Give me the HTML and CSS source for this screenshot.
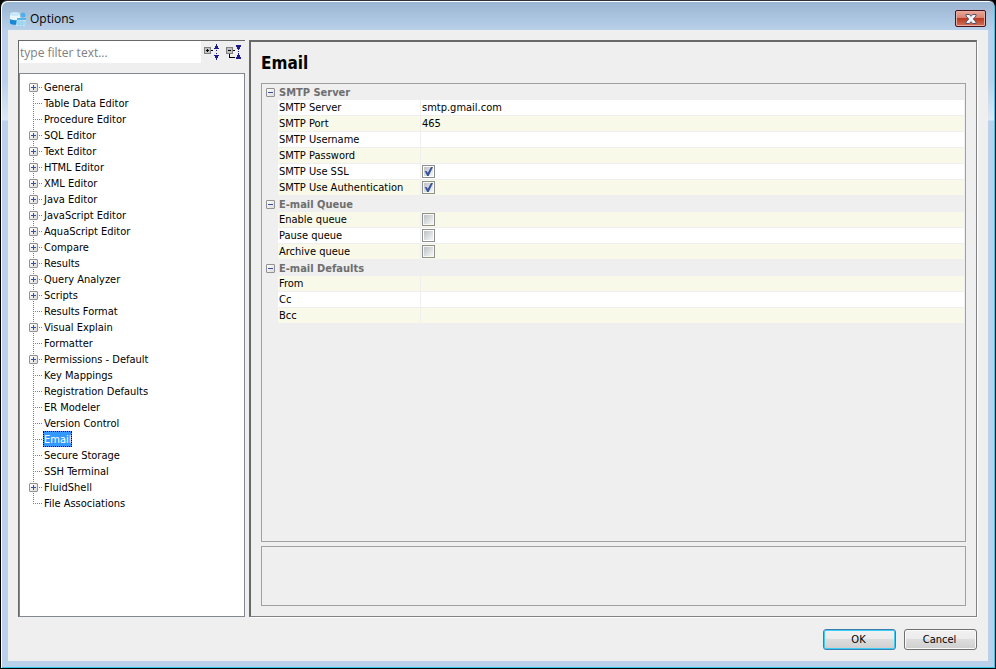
FILE: index.html
```html
<!DOCTYPE html>
<html lang="en">
<head>
<meta charset="utf-8">
<title>Options</title>
<link rel="stylesheet" href="styles.css">
</head>
<body>
<div class="window">
  <header class="titlebar">
    <svg class="app-icon" viewBox="0 0 16 16" aria-hidden="true">
      <path d="M0 3v9c1 2 8 2 10 0V3z" fill="#2f9be0"/>
      <path d="M0 4v4c2 1.500 8 1.500 10 0V4z" fill="#e8f6fd"/>
      <ellipse cx="5" cy="3" rx="5" ry="2" fill="#c9e9f8"/>
      <path d="M0 8.500c2 1.500 8 1.500 10 0V12c-1 2-9 2-10 0z" fill="#1787d6"/>
      <circle cx="13" cy="4" r="2.500" fill="#4fb0ea"/>
      <path d="M7 7h9l-1 8H6z" fill="#c4e8f8"/>
      <path d="M7 7h9v2H7z" fill="#5bb6e8"/>
      <path d="M7 11h8M7 13h8M9 9v6M12 9v6" stroke="#8ccbee" stroke-width="1"/>
    </svg>
    <h1 class="title">Options</h1>
    <button class="close" type="button" aria-label="Close">
      <svg viewBox="0 0 12 10" aria-hidden="true"><path d="M1 .5h3.500L6 2.300 7.500.500H11v1.500L8.300 5 11 8v1.500H7.500L6 7.700 4.500 9.500H1V8l2.700-3L1 2z" fill="#f4f4f6" stroke="#53566b" stroke-width="1"/></svg>
    </button>
  </header>
  <main class="client">
    <div class="panes">
      <nav class="sidebar">
        <div class="filter">
          <input class="filter-box" type="text" placeholder="type filter text..." aria-label="Filter">
          <button class="tool" type="button" aria-label="Expand all">
            <svg viewBox="0 0 16 16" shape-rendering="crispEdges" aria-hidden="true">
              <path d="M.5 3.500h6v6h-6z" fill="#c0c0c0" stroke="#808080"/>
              <path d="M2 6h3v1H2zM3 5h1v3H3zM7 6h2v1H7z" fill="#000"/>
              <path d="M12 0h1v2h1v2h1v1h-5V4h1V2h1zM10 11h5v1h-1v2h-1v2h-1v-2h-1v-2h-1zM12 6h1v1h-1zM12 9h1v1h-1z" fill="#1b1b8f"/>
            </svg>
          </button>
          <button class="tool" type="button" aria-label="Collapse all">
            <svg viewBox="0 0 16 16" shape-rendering="crispEdges" aria-hidden="true">
              <path d="M.5 3.500h6v6h-6z" fill="#c0c0c0" stroke="#808080"/>
              <path d="M2 6h3v1H2zM7 6h2v1H7zM3 10h1v3h5v1H3z" fill="#000"/>
              <path d="M10 1h5v2h-1v2h-1v1h-1V5h-1V3h-1zM12 9h1v2h1v2h1v2h-5v-2h1v-2h1zM12 7h1v1h-1z" fill="#1b1b8f"/>
            </svg>
          </button>
        </div>
        <ul class="tree">
          <li><button class="toggle plus" type="button" aria-label="Expand General"></button><a href="#general">General</a></li>
          <li><a href="#table-data">Table Data Editor</a></li>
          <li><a href="#procedure">Procedure Editor</a></li>
          <li><button class="toggle plus" type="button" aria-label="Expand SQL Editor"></button><a href="#sql">SQL Editor</a></li>
          <li><button class="toggle plus" type="button" aria-label="Expand Text Editor"></button><a href="#text">Text Editor</a></li>
          <li><button class="toggle plus" type="button" aria-label="Expand HTML Editor"></button><a href="#html">HTML Editor</a></li>
          <li><button class="toggle plus" type="button" aria-label="Expand XML Editor"></button><a href="#xml">XML Editor</a></li>
          <li><button class="toggle plus" type="button" aria-label="Expand Java Editor"></button><a href="#java">Java Editor</a></li>
          <li><button class="toggle plus" type="button" aria-label="Expand JavaScript Editor"></button><a href="#javascript">JavaScript Editor</a></li>
          <li><button class="toggle plus" type="button" aria-label="Expand AquaScript Editor"></button><a href="#aquascript">AquaScript Editor</a></li>
          <li><button class="toggle plus" type="button" aria-label="Expand Compare"></button><a href="#compare">Compare</a></li>
          <li><button class="toggle plus" type="button" aria-label="Expand Results"></button><a href="#results">Results</a></li>
          <li><button class="toggle plus" type="button" aria-label="Expand Query Analyzer"></button><a href="#analyzer">Query Analyzer</a></li>
          <li><button class="toggle plus" type="button" aria-label="Expand Scripts"></button><a href="#scripts">Scripts</a></li>
          <li><a href="#results-format">Results Format</a></li>
          <li><button class="toggle plus" type="button" aria-label="Expand Visual Explain"></button><a href="#explain">Visual Explain</a></li>
          <li><a href="#formatter">Formatter</a></li>
          <li><button class="toggle plus" type="button" aria-label="Expand Permissions - Default"></button><a href="#permissions">Permissions - Default</a></li>
          <li><a href="#keys">Key Mappings</a></li>
          <li><a href="#registration">Registration Defaults</a></li>
          <li><a href="#er">ER Modeler</a></li>
          <li><a href="#version">Version Control</a></li>
          <li><a class="selected" href="#email" aria-current="page">Email</a></li>
          <li><a href="#storage">Secure Storage</a></li>
          <li><a href="#ssh">SSH Terminal</a></li>
          <li><button class="toggle plus" type="button" aria-label="Expand FluidShell"></button><a href="#fluidshell">FluidShell</a></li>
          <li><a href="#files">File Associations</a></li>
        </ul>
      </nav>
      <section class="page" id="email">
        <h2 class="page-title">Email</h2>
        <div class="properties">
          <table class="grid">
            <colgroup><col class="col-gutter"><col class="col-name"><col></colgroup>
            <tbody>
              <tr class="group"><td><button class="toggle" type="button" aria-label="Collapse SMTP Server"></button></td><th colspan="2">SMTP Server</th></tr>
              <tr class="plain"><td></td><td><label for="server">SMTP Server</label></td><td><input class="value" id="server" type="text" value="smtp.gmail.com"></td></tr>
              <tr class="tint"><td></td><td><label for="port">SMTP Port</label></td><td><input class="value" id="port" type="text" value="465"></td></tr>
              <tr class="plain"><td></td><td><label for="user">SMTP Username</label></td><td><input class="value" id="user" type="text"></td></tr>
              <tr class="tint"><td></td><td><label for="pass">SMTP Password</label></td><td><input class="value" id="pass" type="password"></td></tr>
              <tr class="plain"><td></td><td><label for="ssl">SMTP Use SSL</label></td><td><input class="check" id="ssl" type="checkbox" checked></td></tr>
              <tr class="tint"><td></td><td><label for="auth">SMTP Use Authentication</label></td><td><input class="check" id="auth" type="checkbox" checked></td></tr>
            </tbody>
            <tbody>
              <tr class="group"><td><button class="toggle" type="button" aria-label="Collapse E-mail Queue"></button></td><th colspan="2">E-mail Queue</th></tr>
              <tr class="tint"><td></td><td><label for="enable">Enable queue</label></td><td><input class="check" id="enable" type="checkbox"></td></tr>
              <tr class="plain"><td></td><td><label for="pause">Pause queue</label></td><td><input class="check" id="pause" type="checkbox"></td></tr>
              <tr class="tint"><td></td><td><label for="archive">Archive queue</label></td><td><input class="check" id="archive" type="checkbox"></td></tr>
            </tbody>
            <tbody>
              <tr class="group"><td><button class="toggle" type="button" aria-label="Collapse E-mail Defaults"></button></td><th colspan="2">E-mail Defaults</th></tr>
              <tr class="tint"><td></td><td><label for="from">From</label></td><td><input class="value" id="from" type="text"></td></tr>
              <tr class="plain"><td></td><td><label for="cc">Cc</label></td><td><input class="value" id="cc" type="text"></td></tr>
              <tr class="tint"><td></td><td><label for="bcc">Bcc</label></td><td><input class="value" id="bcc" type="text"></td></tr>
            </tbody>
          </table>
        </div>
        <div class="description"></div>
      </section>
    </div>
    <footer class="actions">
      <button class="button primary" type="button">OK</button>
      <button class="button" type="button">Cancel</button>
    </footer>
  </main>
</div>
</body>
</html>
```
FILE: styles.css
```css
* {
  box-sizing: border-box;
}

body {
  margin: 0;
  background: #000;
  color: #000;
  font: 11px/16px "DejaVu Sans Condensed", "DejaVu Sans", sans-serif;
}

button,
input {
  margin: 0;
  padding: 0;
  font: inherit;
  color: inherit;
}

.window {
  display: flex;
  flex-direction: column;
  height: 100vh;
  padding: 0 7px 7px 6px;
  border: 1px solid #000;
  border-top-color: #2e2e38;
  border-radius: 7px 7px 0 0;
  background: linear-gradient(#99b4d1 0, #b9d1ea 30px, #b9d1ea 80px, #dbe8f6 119px, #b9d1ea 120px);
  box-shadow: inset 1px 1px #fff, inset -1px -1px #35c8e8;
}

.titlebar {
  display: flex;
  align-items: center;
  gap: 4px;
  height: 29px;
  padding: 6px 2px 0 3px;
}

.app-icon {
  width: 16px;
  height: 16px;
}

.title {
  flex: 1;
  margin: 0;
  font: 12px/16px "Open Sans", sans-serif;
}

.close {
  display: flex;
  align-items: center;
  justify-content: center;
  width: 31px;
  height: 17px;
  border: 1px solid #48131f;
  border-radius: 2px;
  background: linear-gradient(#e9a99b 0, #d98272 45%, #b93a20 50%, #d0725b 100%);
  box-shadow: inset 0 0 0 1px #e6aca0;
}

.close svg {
  width: 12px;
  height: 10px;
}

.client {
  flex: 1;
  display: flex;
  flex-direction: column;
  min-height: 0;
  margin-left: 1px;
  padding: 10px 11px 11px 10px;
  background: #efefef;
}

.panes {
  flex: 1;
  display: flex;
  gap: 4px;
  min-height: 0;
}

.sidebar {
  display: flex;
  flex-direction: column;
  width: 227px;
  border-top: 1px solid #696969;
  border-left: 1px solid #696969;
}

.filter {
  display: flex;
  align-items: flex-start;
  height: 32px;
}

.filter-box {
  flex: 1;
  min-width: 0;
  height: 22px;
  padding: 0 1px;
  border: 0;
  background: #fff;
  font: 12px/16px "Open Sans", sans-serif;
}

.filter-box::placeholder {
  color: #808080;
  opacity: 1;
}

.tool {
  width: 22px;
  height: 22px;
  padding: 3px;
  border: 0;
  background: none;
}

.tool svg {
  display: block;
  width: 16px;
  height: 16px;
}

.tree {
  flex: 1;
  margin: 0;
  padding: 5px 9px;
  border: 1px solid #828790;
  background: #fff;
  list-style: none;
}

.tree li {
  display: flex;
  align-items: center;
  position: relative;
  height: 16px;
  padding-left: 14px;
  background:
    repeating-linear-gradient(90deg, #808080 0 1px, transparent 1px 2px) 4px 8px / 10px 1px no-repeat,
    repeating-linear-gradient(#808080 0 1px, transparent 1px 2px) 4px 0 / 1px 16px no-repeat;
}

.tree li:first-child {
  background-position: 4px 8px, 4px 8px;
}

.tree li:last-child {
  background-size: 10px 1px, 1px 9px;
}

.tree a {
  padding: 2px 1px 0;
  line-height: 14px;
  color: #000;
  text-decoration: none;
}

.tree .selected {
  outline: 1px dotted #000;
  outline-offset: -1px;
  background: #3399ff;
  color: #fff;
}

.toggle {
  display: block;
  width: 9px;
  height: 9px;
  border: 1px solid #919191;
  border-radius: 1px;
  background:
    linear-gradient(#39539b, #39539b) center / 5px 1px no-repeat,
    linear-gradient(135deg, #fff, #dcdcdc);
}

.toggle.plus {
  position: absolute;
  left: 0;
  top: 4px;
  background:
    linear-gradient(#39539b, #39539b) center / 5px 1px no-repeat,
    linear-gradient(#39539b, #39539b) center / 1px 5px no-repeat,
    linear-gradient(135deg, #fff, #dcdcdc);
}

.page {
  flex: 1;
  display: flex;
  flex-direction: column;
  min-width: 0;
  padding: 11px 10px 10px;
  border: 2px solid #696969;
  border-right: 1px solid #828282;
  border-bottom: 1px solid #828282;
  box-shadow: 1px 1px #fff;
}

.page-title {
  margin: 0 0 10px;
  font-size: 17px;
  line-height: 20px;
}

.properties {
  flex: 1;
  padding-right: 1px;
  border: 1px solid #a0a0a0;
}

.grid {
  width: 100%;
  border-spacing: 0;
  table-layout: fixed;
}

.col-gutter {
  width: 16px;
}

.col-name {
  width: 142px;
}

.grid td,
.grid th {
  height: 16px;
  padding: 0 1px;
  line-height: 15px;
  text-align: left;
  white-space: nowrap;
}

.grid .group td {
  padding-left: 4px;
}

.grid th {
  color: #6e6e6e;
}

.plain td,
.tint td {
  border-bottom: 1px solid #efefef;
}

.plain td + td {
  background: #fff;
}

.tint td + td {
  background: #f9f9e9;
}

.grid td + td + td {
  border-left: 1px solid #efefef;
  padding: 0;
}

.value {
  display: block;
  width: 100%;
  height: 15px;
  padding: 0 1px;
  border: 0;
  background: transparent;
}

.check {
  appearance: none;
  display: grid;
  place-items: center;
  width: 13px;
  height: 13px;
  margin-left: 1px;
  padding: 1px;
  border: 1px solid #8e8f8f;
  background: linear-gradient(135deg, #bcc1c7, #f6f6f6) content-box #f4f4f4;
}

.check:checked::before {
  content: "";
  width: 9px;
  height: 9px;
  background: #39539b;
  clip-path: polygon(8% 45%, 28% 45%, 42% 65%, 78% 0, 100% 0, 52% 100%, 35% 100%);
}

.description {
  height: 60px;
  margin-top: 4px;
  border: 1px solid #a0a0a0;
}

.actions {
  display: flex;
  justify-content: flex-end;
  gap: 8px;
  padding-top: 12px;
}

.button {
  width: 73px;
  height: 21px;
  padding: 0 2px 0 0;
  border: 1px solid #707070;
  border-radius: 3px;
  background: linear-gradient(#f2f2f2 0, #ebebeb 50%, #dddddd 50%, #cfcfcf 100%);
  box-shadow: inset 0 0 0 1px #fafafa;
}

.primary {
  border-color: #3c7fb1;
  box-shadow: inset 0 0 0 1px #3bcdf5;
}
```
